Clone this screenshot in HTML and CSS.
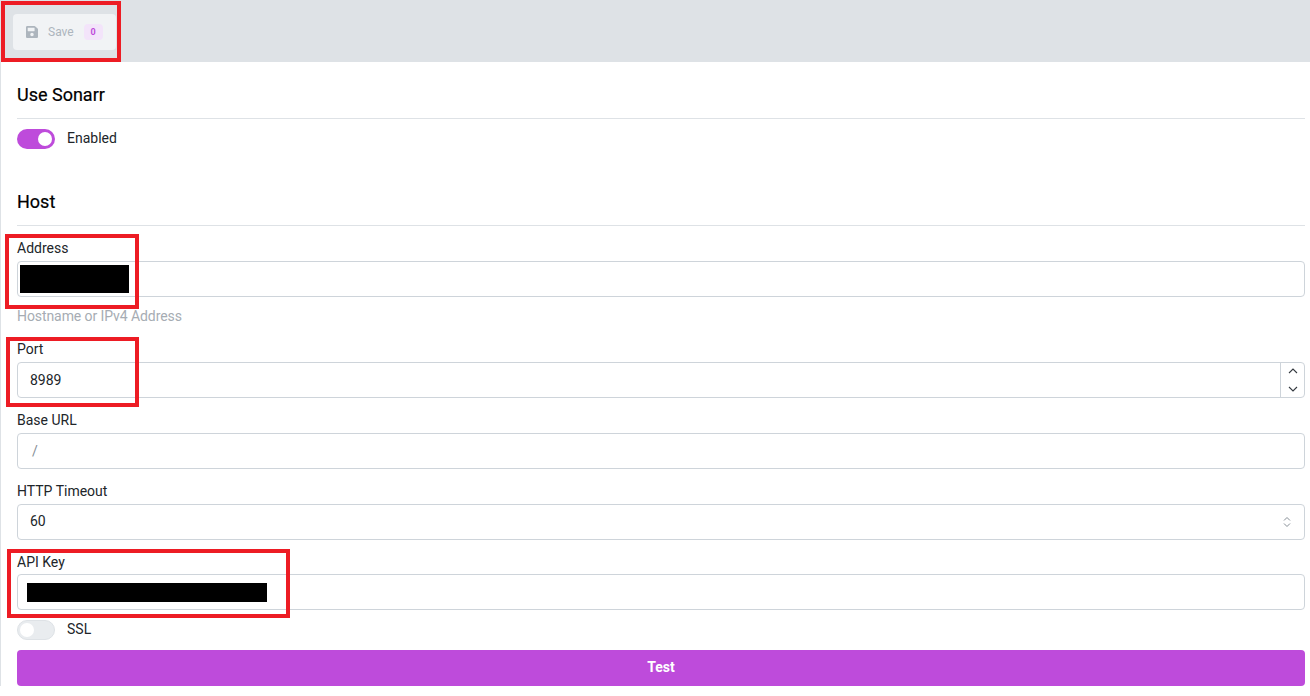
FILE: index.html
```html
<!DOCTYPE html>
<html lang="en">
<head>
<meta charset="utf-8">
<title>Sonarr settings</title>
<link rel="stylesheet" href="styles.css">
</head>
<body>
<div class="page">
  <div class="toolbar">
    <button class="save" type="button">
      <svg class="save-icon" width="12" height="12" viewBox="0 32 448 448"><path fill="#adb5bd" d="M433.9 129.9l-83.9-83.9A48 48 0 0 0 316.1 32H48C21.5 32 0 53.5 0 80v352c0 26.5 21.5 48 48 48h352c26.500 0 48-21.500 48-48V163.900a48 48 0 0 0-14.100-34zM224 416c-35.300 0-64-28.700-64-64 0-35.300 28.700-64 64-64s64 28.700 64 64c0 35.300-28.700 64-64 64zm96-304.500V212c0 6.600-5.400 12-12 12H76c-6.600 0-12-5.400-12-12V108c0-6.600 5.400-12 12-12h228.500c3.200 0 6.200 1.300 8.500 3.500l3.500 3.500c2.200 2.300 3.500 5.300 3.500 8.500z"/></svg>
      <span class="save-label">Save</span>
      <span class="badge">0</span>
    </button>
  </div>
  <main class="content">
    <h2 class="section-title first">Use Sonarr</h2>
    <div class="switch-row enabled-row">
      <span class="switch on"><span class="knob"></span></span>
      <span class="switch-label">Enabled</span>
    </div>
    <h2 class="section-title host">Host</h2>
    <label class="label l-address">Address</label>
    <div class="input"></div>
    <div class="hint">Hostname or IPv4 Address</div>
    <label class="label l-port">Port</label>
    <div class="input has-stepper">
      <span class="value">8989</span>
      <span class="stepper">
        <svg width="10" height="6" viewBox="0 0 10 6"><path d="M1 5l4-4 4 4" fill="none" stroke="#343a40" stroke-width="1.100"/></svg>
        <svg width="10" height="6" viewBox="0 0 10 6"><path d="M1 1l4 4 4-4" fill="none" stroke="#343a40" stroke-width="1.100"/></svg>
      </span>
    </div>
    <label class="label l-rest">Base URL</label>
    <div class="input"><span class="value slash">/</span></div>
    <label class="label l-rest">HTTP Timeout</label>
    <div class="input has-select">
      <span class="value">60</span>
      <svg class="select-arrows" width="8" height="12" viewBox="0 0 8 12"><path d="M1 4.500l3-3 3 3M1 7.500l3 3 3-3" fill="none" stroke="#868e96" stroke-width="1"/></svg>
    </div>
    <label class="label l-api">API Key</label>
    <div class="input"></div>
    <div class="switch-row ssl-row">
      <span class="switch off"><span class="knob"></span></span>
      <span class="switch-label">SSL</span>
    </div>
    <button class="test" type="button">Test</button>
  </main>
  <div class="redact r-address"></div>
  <div class="redact r-api"></div>
  <div class="mark m-save"></div>
  <div class="mark m-address"></div>
  <div class="mark m-port"></div>
  <div class="mark m-api"></div>
</div>
</body>
</html>
```
FILE: styles.css
```css
* { box-sizing: border-box; }
html, body { margin: 0; padding: 0; background: #fff; }
body {
  font-family: Roboto, "Liberation Sans", sans-serif;
  font-size: 14px;
  color: #212529;
  overflow: hidden;
}
.page { position: relative; width: 1310px; height: 696px; overflow: hidden; }
.toolbar {
  height: 62px;
  background: #dee2e6;
  padding: 14px 0 0 13px;
}
.save {
  display: flex;
  align-items: center;
  width: 103px;
  height: 36px;
  padding: 0 0 0 13px;
  border: 0;
  border-radius: 4px;
  background: #f1f3f5;
  font: inherit;
}
.save-icon { flex: none; }
.save-label { margin-left: 10px; font-size: 12px; color: #adb5bd; }
.badge {
  margin-left: 10px;
  width: 19px;
  height: 16px;
  border-radius: 4px;
  background: #f3e4fa;
  color: #be4bdb;
  font-size: 9px;
  font-weight: 700;
  line-height: 16px;
  text-align: center;
}
.content {
  display: flex;
  flex-direction: column;
  align-items: stretch;
  margin-left: 1px;
  padding: 0 5px 0 16px;
  box-shadow: -1px 0 0 #dee2e6;
}
.section-title {
  margin: 0;
  height: 33px;
  border-bottom: 1px solid #dee2e6;
  font-size: 18px;
  font-weight: 400;
  line-height: 21px;
  color: #000;
  -webkit-text-stroke: 0.2px #000;
}
.section-title.first { margin-top: 22px; height: 35px; }
.section-title.host { margin-top: 42px; height: 35px; }
.switch-row { display: flex; align-items: center; height: 20px; }
.enabled-row { margin-top: 10px; }
.ssl-row { margin-top: 10px; }
.switch {
  display: flex;
  align-items: center;
  width: 38px;
  height: 20px;
  border-radius: 10px;
  padding: 0 3px;
}
.switch.on { background: #be4bdb; justify-content: flex-end; }
.switch.off { background: #e9ecef; border: 1px solid #dee2e6; padding: 0 2px; }
.knob { width: 14px; height: 14px; border-radius: 50%; background: #fff; }
.switch-label { margin-left: 12px; line-height: 18px; padding-bottom: 2px; }
.label { display: block; height: 21px; line-height: 21px; }
.l-address { margin-top: 12px; height: 23px; }
.l-port { margin-top: 12px; height: 23px; }
.l-rest { margin-top: 12px; height: 23px; }
.l-api { margin-top: 12px; height: 22px; }
.input {
  display: flex;
  align-items: center;
  position: relative;
  height: 36px;
  border: 1px solid #ced4da;
  border-radius: 4px;
  background: #fff;
  padding-left: 12px;
}
.value { color: #212529; }
.has-select .value { padding-bottom: 2px; }
.slash { padding-left: 2px; color: #868e96; }
.hint { margin-top: 9px; height: 21px; line-height: 20px; color: #a6acb3; letter-spacing: -0.08px; }
.stepper {
  position: absolute;
  top: 0; right: 0; bottom: 0;
  width: 24px;
  border-left: 1px solid #ced4da;
  display: flex;
  flex-direction: column;
  align-items: center;
  justify-content: space-between;
  padding: 5px 0;
}
.select-arrows { position: absolute; right: 13px; top: 11px; }
.test {
  display: block;
  margin-top: 10px;
  height: 36px;
  padding: 0 0 2px;
  border: 0;
  border-radius: 4px;
  background: #be4bdb;
  color: #fff;
  font: 700 14px Roboto, "Liberation Sans", sans-serif;
}
.redact { position: absolute; background: #000; }
.r-address { left: 20px; top: 265px; width: 109px; height: 28px; }
.r-api { left: 27px; top: 583px; width: 240px; height: 19px; }
.mark { position: absolute; border: 4px solid #ed1c24; }
.m-save { left: 1px; top: 1px; width: 120px; height: 61px; }
.m-address { left: 5px; top: 234px; width: 134px; height: 75px; }
.m-port { left: 6px; top: 337px; width: 133px; height: 70px; }
.m-api { left: 7px; top: 549px; width: 283px; height: 69px; }
```
